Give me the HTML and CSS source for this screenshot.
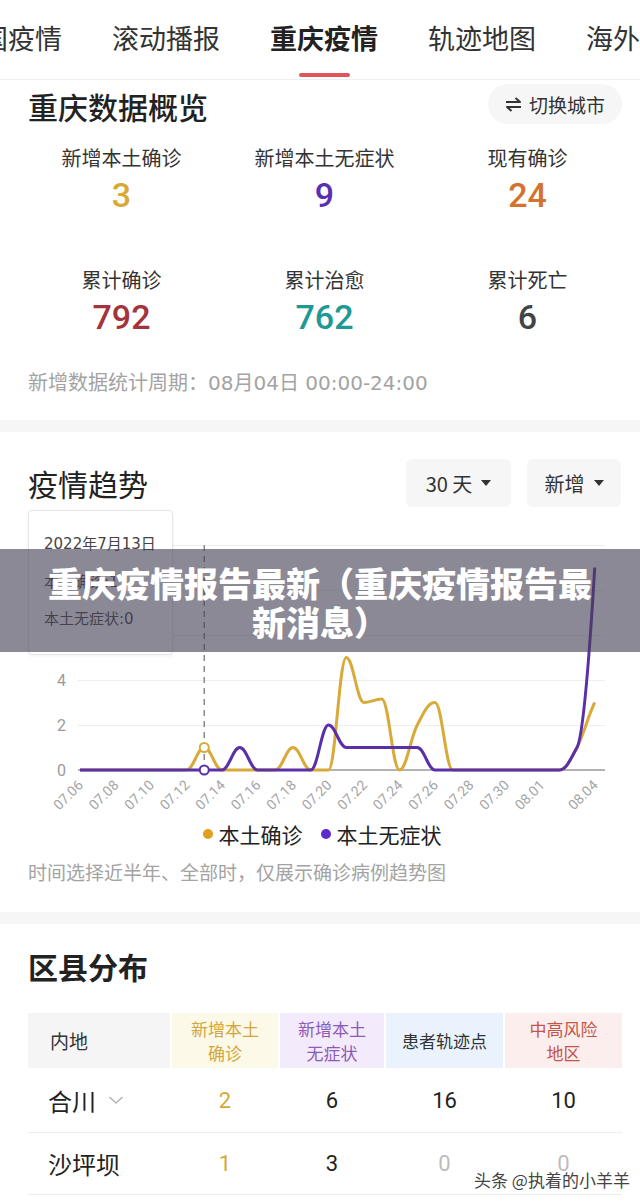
FILE: index.html
```html
<!DOCTYPE html>
<html lang="zh-CN">
<head>
<meta charset="utf-8">
<title>重庆疫情</title>
<link rel="stylesheet" href="styles.css">
</head>
<body>
<div class="page">
  <nav class="tabs">
    <div class="tab">全国疫情</div>
    <div class="tab">滚动播报</div>
    <div class="tab active">重庆疫情</div>
    <div class="tab">轨迹地图</div>
    <div class="tab">海外疫情</div>
  </nav>

  <section class="card overview">
    <div class="card-head">
      <h2 class="ov-title">重庆数据概览</h2>
      <div class="switch">
        <svg class="switch-icon" width="17" height="15" viewBox="0 0 17 15"><path d="M1 5H15L10.5 1" fill="none" stroke="#333" stroke-width="2" stroke-linejoin="round"/><path d="M16 10H2L6.5 14" fill="none" stroke="#333" stroke-width="2" stroke-linejoin="round"/></svg>
        <span>切换城市</span>
      </div>
    </div>
    <div class="stats">
      <div class="stat"><div class="stat-label">新增本土确诊</div><div class="stat-num c-gold">3</div></div>
      <div class="stat"><div class="stat-label">新增本土无症状</div><div class="stat-num c-purple">9</div></div>
      <div class="stat"><div class="stat-label">现有确诊</div><div class="stat-num c-orange">24</div></div>
      <div class="stat"><div class="stat-label">累计确诊</div><div class="stat-num c-red">792</div></div>
      <div class="stat"><div class="stat-label">累计治愈</div><div class="stat-num c-teal">762</div></div>
      <div class="stat"><div class="stat-label">累计死亡</div><div class="stat-num c-dark">6</div></div>
    </div>
    <p class="period">新增数据统计周期：08月04日 00:00-24:00</p>
  </section>

  <section class="card trend">
    <div class="card-head trend-head">
      <h2 class="trend-title">疫情趋势</h2>
      <div class="selects">
        <div class="select days"><span>30 天</span><i class="caret"></i></div>
        <div class="select kind"><span>新增</span><i class="caret"></i></div>
      </div>
    </div>
    <div class="chart">
      <svg width="640" height="311" viewBox="0 509 640 311">
        <g stroke="#eeeeee" stroke-width="1">
          <line x1="78" y1="545.5" x2="605" y2="545.5"/>
          <line x1="78" y1="590.5" x2="605" y2="590.5"/>
          <line x1="78" y1="635.5" x2="605" y2="635.5"/>
          <line x1="78" y1="680.5" x2="605" y2="680.5"/>
          <line x1="78" y1="725.5" x2="605" y2="725.5"/>
        </g>
        <line x1="78" y1="770" x2="605" y2="770" stroke="#9a9a9a" stroke-width="1.5"/>
        <g class="ylab" fill="#9a9a9a" font-size="16" text-anchor="end">
          <text x="66" y="551">10</text>
          <text x="66" y="596">8</text>
          <text x="66" y="641">6</text>
          <text x="66" y="686">4</text>
          <text x="66" y="731">2</text>
          <text x="66" y="776">0</text>
        </g>
        <line x1="204.25" y1="545" x2="204.25" y2="770" stroke="#8a8a8a" stroke-width="1.5" stroke-dasharray="6 5"/>
        <path fill="none" stroke="#d8aa3a" stroke-width="3" stroke-linejoin="round" d="M80 770 L186.5 770 C193.5 770 197.25 747.5 204.25 747.5 C211.25 747.5 215 770 222 770 L275.25 770 C282.25 770 286 747.5 293 747.5 C300 747.5 303.75 770 310.75 770 L328.5 770 C335.5 770 339.25 657.5 346.25 657.5 C353.25 657.5 357 702.5 364 702.5 C370 702.5 375 699 381.75 699 C388.75 699 392.5 770 399.5 770 C406.5 770 410.25 738.3 417.25 725 C424.25 711.7 428 702.5 435 702.5 C442 702.5 445.75 770 452.75 770 L559.25 770 C566.25 770 570 760.8 577 747.5 C584 734.2 588 716 594.75 702.5"/>
        <path fill="none" stroke="#5a30a8" stroke-width="3" stroke-linejoin="round" d="M80 770 L222 770 C229 770 232.75 747.5 239.75 747.5 C246.75 747.5 250.5 770 257.5 770 L310.75 770 C317.75 770 321.5 725 328.5 725 C335.5 725 339.25 747.5 346.25 747.5 L417.25 747.5 C424.25 747.5 428 770 435 770 L559.25 770 C566.25 770 570 760 577 747.5 C584 735 591 630 594.75 567.5"/>
        <circle cx="204.25" cy="747.5" r="4.5" fill="#fff" stroke="#d8aa3a" stroke-width="2"/>
        <circle cx="204.25" cy="770" r="4.5" fill="#fff" stroke="#5a30a8" stroke-width="2"/>
        <g class="xlab" fill="#a5a5a5" font-size="14" text-anchor="end">
          <text x="84" y="786" transform="rotate(-45 84 786)">07.06</text>
          <text x="119.5" y="786" transform="rotate(-45 119.5 786)">07.08</text>
          <text x="155" y="786" transform="rotate(-45 155 786)">07.10</text>
          <text x="190.5" y="786" transform="rotate(-45 190.5 786)">07.12</text>
          <text x="226" y="786" transform="rotate(-45 226 786)">07.14</text>
          <text x="261.5" y="786" transform="rotate(-45 261.5 786)">07.16</text>
          <text x="297" y="786" transform="rotate(-45 297 786)">07.18</text>
          <text x="332.5" y="786" transform="rotate(-45 332.5 786)">07.20</text>
          <text x="368" y="786" transform="rotate(-45 368 786)">07.22</text>
          <text x="403.5" y="786" transform="rotate(-45 403.5 786)">07.24</text>
          <text x="439" y="786" transform="rotate(-45 439 786)">07.26</text>
          <text x="474.5" y="786" transform="rotate(-45 474.5 786)">07.28</text>
          <text x="510" y="786" transform="rotate(-45 510 786)">07.30</text>
          <text x="545.5" y="786" transform="rotate(-45 545.5 786)">08.01</text>
          <text x="598.75" y="786" transform="rotate(-45 598.75 786)">08.04</text>
        </g>
      </svg>
      <div class="tooltip">
        <div>2022年7月13日</div>
        <div>本土确诊:1</div>
        <div>本土无症状:0</div>
      </div>
    </div>
    <div class="legend">
      <div class="legend-item"><i class="dot bg-gold"></i><span>本土确诊</span></div>
      <div class="legend-item"><i class="dot bg-purple"></i><span>本土无症状</span></div>
    </div>
    <p class="note">时间选择近半年、全部时，仅展示确诊病例趋势图</p>
  </section>

  <section class="card district">
    <h2 class="district-title">区县分布</h2>
    <div class="table">
      <div class="thead">
        <div class="h0">内地</div>
        <div class="h1">新增本土<br>确诊</div>
        <div class="h2">新增本土<br>无症状</div>
        <div class="h3">患者轨迹点</div>
        <div class="h4">中高风险<br>地区</div>
      </div>
      <div class="trow">
        <div class="name">合川<svg width="16" height="10" viewBox="0 0 16 10"><polyline points="1.5,2 8,8 14.5,2" fill="none" stroke="#b5b5b5" stroke-width="1.5"/></svg></div>
        <div class="c-gold">2</div>
        <div>6</div>
        <div>16</div>
        <div>10</div>
      </div>
      <div class="trow">
        <div class="name">沙坪坝</div>
        <div class="c-gold">1</div>
        <div>3</div>
        <div class="c-zero">0</div>
        <div class="c-zero">0</div>
      </div>
    </div>
  </section>

  <div class="banner">重庆疫情报告最新（重庆疫情报告最新消息）</div>
  <div class="watermark">头条 @执着的小羊羊</div>
</div>
</body>
</html>
```

FILE: styles.css
```css
* { box-sizing: border-box; margin: 0; padding: 0; }
body {
  margin: 0;
  background: #f6f6f6;
  font-family: "Noto Sans CJK SC", "Noto Sans", sans-serif;
  color: #333;
  width: 640px;
}
.page { position: relative; width: 640px; height: 1202px; overflow: hidden; }

.tabs {
  display: flex;
  gap: 50px;
  height: 80px;
  background: #fff;
  border-bottom: 1px solid #eee;
  white-space: nowrap;
  overflow: hidden;
}
.tab { flex: none; position: relative; font-size: 27px; line-height: 36px; padding-top: 20px; color: #333; }
.tab:first-child { margin-left: -46px; }
.tab.active { font-weight: 700; color: #222; }
.tab.active::after {
  content: "";
  position: absolute;
  left: 50%;
  top: 73px;
  width: 51px;
  height: 4px;
  margin-left: -25.5px;
  background: #e0555c;
  border-radius: 2px;
}

.card { background: #fff; margin-bottom: 12px; }
.card-head { display: flex; justify-content: space-between; align-items: flex-start; }

.overview { padding: 4px 18px 24px 28px; }
.ov-title { font-size: 30px; font-weight: 500; line-height: 40px; padding-top: 2px; color: #222; }
.switch {
  width: 134px;
  height: 40px;
  border-radius: 20px;
  background: #f6f6f6;
  display: flex;
  align-items: center;
  justify-content: center;
  gap: 7px;
  font-size: 19px;
  color: #333;
}
.stats {
  display: grid;
  grid-template-columns: repeat(3, 203px);
  row-gap: 54px;
  margin: 19px 0 0 -8px;
}
.stat { display: flex; flex-direction: column; align-items: center; gap: 6px; }
.stat-label { font-size: 20px; line-height: 26px; color: #333; }
.stat-num { font-family: Roboto, "Noto Sans", sans-serif; font-size: 34px; font-weight: 500; line-height: 36px; }
.c-gold { color: #d6a935; }
.c-purple { color: #5b2fb0; }
.c-orange { color: #d2732f; }
.c-red { color: #a5333b; }
.c-teal { color: #1e9994; }
.c-dark { color: #444; }
.period {
  margin-top: 35px;
  font-family: "DejaVu Sans", "Noto Sans CJK SC", sans-serif;
  font-size: 20px;
  line-height: 26px;
  color: #a3a3a3;
}

.trend-head { padding: 27px 19px 0 28px; align-items: center; }
.trend-title { font-size: 30px; font-weight: 400; line-height: 48px; color: #222; }
.selects { display: flex; gap: 16px; }
.select {
  height: 48px;
  display: flex;
  align-items: center;
  justify-content: center;
  gap: 9px;
  background: #f6f6f6;
  border-radius: 6px;
  font-size: 20px;
  color: #333;
}
.select.days { width: 105px; }
.select.kind { width: 94px; }
.caret {
  width: 0;
  height: 0;
  border-left: 5px solid transparent;
  border-right: 5px solid transparent;
  border-top: 6px solid #333;
}
.chart { position: relative; height: 311px; margin-top: 2px; }
.chart svg { display: block; font-family: Roboto, "Noto Sans", sans-serif; }
.tooltip {
  position: absolute;
  left: 28px;
  top: 1px;
  width: 145px;
  height: 145px;
  background: #fff;
  border: 1px solid #e6e6e6;
  border-radius: 4px;
  box-shadow: 0 1px 4px rgba(0, 0, 0, 0.06);
  padding: 22px 0 0 15px;
  font-family: "DejaVu Sans", "Noto Sans CJK SC", sans-serif;
  font-size: 15px;
  line-height: 22px;
  color: #444;
  display: flex;
  flex-direction: column;
  gap: 15.5px;
}
.legend { display: flex; justify-content: center; align-items: center; gap: 18px; height: 28px; font-size: 21px; color: #222; padding-left: 4px; }
.legend-item { display: flex; align-items: center; gap: 6px; }
.dot { display: block; width: 10px; height: 10px; border-radius: 50%; }
.bg-gold { background: #e0a020; }
.bg-purple { background: #5b2bd0; }
.note { margin-top: 11px; padding: 0 28px 27px; font-size: 19px; line-height: 26px; color: #a3a3a3; }

.district { padding: 22px 18px 0 28px; height: 278px; margin-bottom: 0; }
.district-title { font-size: 30px; font-weight: 700; line-height: 40px; color: #222; }
.table { margin-top: 27px; }
.thead, .trow {
  display: grid;
  grid-template-columns: 142px 106px 104px 117px 117px;
  column-gap: 2px;
}
.thead > div {
  height: 55px;
  display: flex;
  align-items: center;
  justify-content: center;
  text-align: center;
  font-size: 17px;
  line-height: 24px;
}
.thead .h0 { justify-content: flex-start; padding-left: 22px; font-size: 19px; background: #f5f5f5; color: #333; }
.thead .h1 { background: #fdf9e8; color: #d3a63c; }
.thead .h2 { background: #f3ebfb; color: #8c5bb5; }
.thead .h3 { background: #eaf3fd; color: #333; }
.thead .h4 { background: #fdeeee; color: #c25449; }
.trow { height: 65px; align-items: center; border-bottom: 1px solid #eee; }
.trow + .trow { height: 62px; }
.trow > div { text-align: center; font-family: Roboto, "Noto Sans", sans-serif; font-size: 22px; color: #222; }
.trow > .c-gold { color: #d6a935; }
.trow > .c-zero { color: #bdbdbd; }
.trow .name {
  display: flex;
  align-items: center;
  gap: 12px;
  padding-left: 20px;
  text-align: left;
  font-family: "Noto Sans CJK SC", sans-serif;
  font-size: 24px;
  color: #222;
}

.banner {
  position: absolute;
  left: 0;
  top: 549px;
  width: 640px;
  height: 103px;
  padding: 14px 40px 0;
  background: rgba(70, 65, 85, 0.62);
  color: #fff;
  font-size: 34px;
  font-weight: 900;
  line-height: 39px;
  text-align: center;
}
.watermark {
  position: absolute;
  left: 474px;
  top: 1168px;
  font-size: 17px;
  line-height: 24px;
  color: #444;
  text-shadow: 0 0 2px #fff, 0 0 2px #fff, 0 0 3px #fff;
}
```
